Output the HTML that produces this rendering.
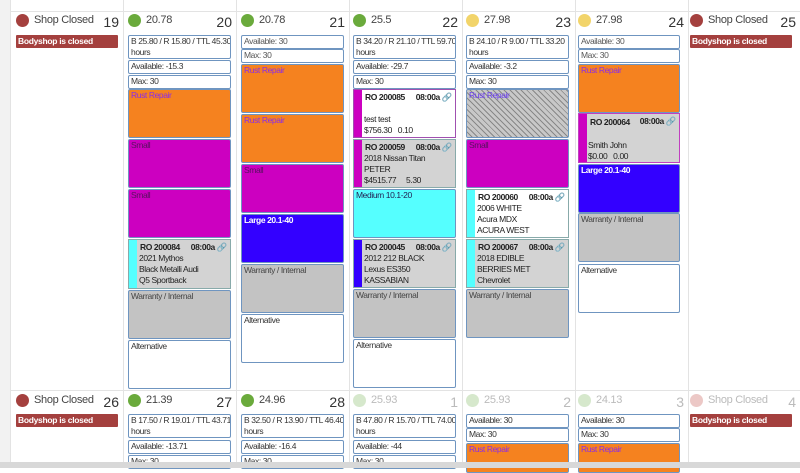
<!DOCTYPE html><html><head><style>
*{margin:0;padding:0;box-sizing:border-box}
body{width:800px;height:468px;overflow:hidden;background:#fff;position:relative;font-family:"Liberation Sans Narrow","Liberation Sans",sans-serif;color:#333}
.a{position:absolute}
.vl{position:absolute;top:0;width:1px;height:462px;background:#e3e3e3}
.hl{position:absolute;left:10px;width:790px;height:1px;background:#e3e3e3}
.dot{position:absolute;width:13px;height:13px;border-radius:50%}
.ht{position:absolute;font-size:11px;color:#444;letter-spacing:-0.3px}
.dn{position:absolute;font-size:14px;color:#333;text-align:right;width:20px}
.bc{position:absolute;height:13px;background:#a4403e;color:#fff;font-size:8.5px;font-weight:bold;padding:1px 2px;border-radius:1px;line-height:11px;letter-spacing:-0.3px}
.b{position:absolute;border:1px solid #6f95c0;border-radius:2px;font-size:8.5px;line-height:11px;padding:0 2px;overflow:hidden;letter-spacing:-0.4px;white-space:nowrap}
.w{background:#fff}
.o{background:#f5821f;color:#8b2ce8}
.m{background:#cc00c0;color:#5a1060}
.bl{background:#3300ff;color:#fff;font-weight:bold}
.g{background:#c3c3c3;color:#444}
.c{background:#55ffff;color:#225}
.h{background:repeating-linear-gradient(45deg,#c8c8c8 0 3px,#888 3px 4px);color:#6a3cf0}
.ro{position:absolute;border:1px solid #8aa;font-size:8.5px;line-height:11px;overflow:hidden;color:#222;letter-spacing:-0.4px;white-space:nowrap}
.ro .s{position:absolute;left:0;top:0;bottom:0;width:8px}
.ro .t{position:absolute;left:11px;top:2px;font-weight:bold}
.ro .tm{position:absolute;right:3px;top:2px;font-weight:bold}
.ro .d{position:absolute;left:10px}
</style></head><body>
<div class="a" style="left:0;top:0;width:10px;height:462px;background:#f2f2f2"></div>
<div class="vl" style="left:10px"></div><div class="vl" style="left:123px"></div><div class="vl" style="left:236px"></div><div class="vl" style="left:349px"></div><div class="vl" style="left:462px"></div><div class="vl" style="left:575px"></div><div class="vl" style="left:688px"></div>
<div class="hl" style="top:11px"></div><div class="hl" style="top:390px"></div>

<div class="dot" style="left:16px;top:14px;background:#a4403e"></div><div class="ht" style="left:34px;top:14px">Shop Closed</div><div class="dn" style="left:99px;top:14px">19</div>
<div class="bc" style="left:16px;top:35px;width:102px">Bodyshop is closed</div>
<div class="dot" style="left:128px;top:14px;background:#6aaa3c"></div><div class="ht" style="left:146px;top:14px">20.78</div><div class="dn" style="left:212px;top:14px">20</div>
<div class="dot" style="left:241px;top:14px;background:#6aaa3c"></div><div class="ht" style="left:259px;top:14px">20.78</div><div class="dn" style="left:325px;top:14px">21</div>
<div class="dot" style="left:353px;top:14px;background:#6aaa3c"></div><div class="ht" style="left:371px;top:14px">25.5</div><div class="dn" style="left:438px;top:14px">22</div>
<div class="dot" style="left:466px;top:14px;background:#f2d46a"></div><div class="ht" style="left:484px;top:14px">27.98</div><div class="dn" style="left:551px;top:14px">23</div>
<div class="dot" style="left:578px;top:14px;background:#f2d46a"></div><div class="ht" style="left:596px;top:14px">27.98</div><div class="dn" style="left:664px;top:14px">24</div>
<div class="dot" style="left:690px;top:14px;background:#a4403e"></div><div class="ht" style="left:708px;top:14px">Shop Closed</div><div class="dn" style="left:776px;top:14px">25</div>
<div class="bc" style="left:690px;top:35px;width:102px">Bodyshop is closed</div>

<div class="b w" style="left:128px;top:35px;width:103px;height:24px">B 25.80 / R 15.80 / TTL 45.30<br>hours</div>
<div class="b w" style="left:128px;top:60px;width:103px;height:14px">Available: -15.3</div>
<div class="b w" style="left:128px;top:75px;width:103px;height:14px">Max: 30</div>
<div class="b o" style="left:128px;top:89px;width:103px;height:49px">Rust Repair</div>
<div class="b m" style="left:128px;top:139px;width:103px;height:49px">Small</div>
<div class="b m" style="left:128px;top:189px;width:103px;height:49px">Small</div>
<div class="ro" style="left:128px;top:239px;width:103px;height:50px;background:#d3d3d3"><div class="s" style="background:#55ffff"></div><div class="t">RO 200084</div><div class="tm">08:00a <span style="color:#69c">&#128279;</span></div><div class="d" style="top:13px">2021 Mythos<br>Black Metalli Audi<br>Q5 Sportback</div></div>
<div class="b g" style="left:128px;top:290px;width:103px;height:49px">Warranty / Internal</div>
<div class="b w" style="left:128px;top:340px;width:103px;height:49px">Alternative</div>

<div class="b w" style="left:241px;top:35px;width:103px;height:14px;color:#555">Available: 30</div>
<div class="b w" style="left:241px;top:49px;width:103px;height:14px;color:#555">Max: 30</div>
<div class="b o" style="left:241px;top:64px;width:103px;height:49px">Rust Repair</div>
<div class="b o" style="left:241px;top:114px;width:103px;height:49px">Rust Repair</div>
<div class="b m" style="left:241px;top:164px;width:103px;height:49px">Small</div>
<div class="b bl" style="left:241px;top:214px;width:103px;height:49px">Large 20.1-40</div>
<div class="b g" style="left:241px;top:264px;width:103px;height:49px">Warranty / Internal</div>
<div class="b w" style="left:241px;top:314px;width:103px;height:49px">Alternative</div>

<div class="b w" style="left:353px;top:35px;width:103px;height:24px">B 34.20 / R 21.10 / TTL 59.70<br>hours</div>
<div class="b w" style="left:353px;top:60px;width:103px;height:14px">Available: -29.7</div>
<div class="b w" style="left:353px;top:75px;width:103px;height:14px">Max: 30</div>
<div class="ro" style="left:353px;top:89px;width:103px;height:49px;background:#fff;border-color:#a050b0"><div class="s" style="background:#cc00c0"></div><div class="t">RO 200085</div><div class="tm">08:00a <span style="color:#69c">&#128279;</span></div><div class="d" style="top:24px">test test<br>$756.30 &nbsp; 0.10</div></div>
<div class="ro" style="left:353px;top:139px;width:103px;height:49px;background:#d3d3d3"><div class="s" style="background:#cc00c0"></div><div class="t">RO 200059</div><div class="tm">08:00a <span style="color:#69c">&#128279;</span></div><div class="d" style="top:13px">2018 Nissan Titan<br>PETER<br>$4515.77 &nbsp; &nbsp; 5.30</div></div>
<div class="b c" style="left:353px;top:189px;width:103px;height:49px">Medium 10.1-20</div>
<div class="ro" style="left:353px;top:239px;width:103px;height:49px;background:#d3d3d3"><div class="s" style="background:#3300ff"></div><div class="t">RO 200045</div><div class="tm">08:00a <span style="color:#69c">&#128279;</span></div><div class="d" style="top:13px">2012 212 BLACK<br>Lexus ES350<br>KASSABIAN</div></div>
<div class="b g" style="left:353px;top:289px;width:103px;height:49px">Warranty / Internal</div>
<div class="b w" style="left:353px;top:339px;width:103px;height:49px">Alternative</div>

<div class="b w" style="left:466px;top:35px;width:103px;height:24px">B 24.10 / R 9.00 / TTL 33.20<br>hours</div>
<div class="b w" style="left:466px;top:60px;width:103px;height:14px">Available: -3.2</div>
<div class="b w" style="left:466px;top:75px;width:103px;height:14px">Max: 30</div>
<div class="b h" style="left:466px;top:89px;width:103px;height:49px">Rust Repair</div>
<div class="b m" style="left:466px;top:139px;width:103px;height:49px">Small</div>
<div class="ro" style="left:466px;top:189px;width:103px;height:49px;background:#fff"><div class="s" style="background:#55ffff"></div><div class="t">RO 200060</div><div class="tm">08:00a <span style="color:#69c">&#128279;</span></div><div class="d" style="top:13px">2006 WHITE<br>Acura MDX<br>ACURA WEST</div></div>
<div class="ro" style="left:466px;top:239px;width:103px;height:49px;background:#d3d3d3"><div class="s" style="background:#55ffff"></div><div class="t">RO 200067</div><div class="tm">08:00a <span style="color:#69c">&#128279;</span></div><div class="d" style="top:13px">2018 EDIBLE<br>BERRIES MET<br>Chevrolet</div></div>
<div class="b g" style="left:466px;top:289px;width:103px;height:49px">Warranty / Internal</div>

<div class="b w" style="left:578px;top:35px;width:102px;height:14px;color:#555">Available: 30</div>
<div class="b w" style="left:578px;top:49px;width:102px;height:14px;color:#555">Max: 30</div>
<div class="b o" style="left:578px;top:64px;width:102px;height:49px">Rust Repair</div>
<div class="ro" style="left:578px;top:113px;width:102px;height:50px;background:#d3d3d3;border-color:#c040c0"><div class="s" style="background:#cc00c0"></div><div class="t" style="top:3px">RO 200064</div><div class="tm">08:00a <span style="color:#69c">&#128279;</span></div><div class="d" style="left:9px;top:26px">Smith John<br>$0.00 &nbsp; 0.00</div></div>
<div class="b bl" style="left:578px;top:164px;width:102px;height:49px">Large 20.1-40</div>
<div class="b g" style="left:578px;top:213px;width:102px;height:49px">Warranty / Internal</div>
<div class="b w" style="left:578px;top:264px;width:102px;height:49px">Alternative</div>

<div class="dot" style="left:16px;top:394px;background:#a4403e"></div><div class="ht" style="left:34px;top:394px">Shop Closed</div><div class="dn" style="left:99px;top:394px">26</div>
<div class="bc" style="left:16px;top:414px;width:102px">Bodyshop is closed</div>
<div class="dot" style="left:128px;top:394px;background:#6aaa3c"></div><div class="ht" style="left:146px;top:394px">21.39</div><div class="dn" style="left:212px;top:394px">27</div>
<div class="dot" style="left:241px;top:394px;background:#6aaa3c"></div><div class="ht" style="left:259px;top:394px">24.96</div><div class="dn" style="left:325px;top:394px">28</div>
<div class="dot" style="left:353px;top:394px;background:#d6e8cc"></div><div class="ht" style="left:371px;top:394px;color:#bbb">25.93</div><div class="dn" style="left:438px;top:394px;color:#bbb">1</div>
<div class="dot" style="left:466px;top:394px;background:#d6e8cc"></div><div class="ht" style="left:484px;top:394px;color:#bbb">25.93</div><div class="dn" style="left:551px;top:394px;color:#bbb">2</div>
<div class="dot" style="left:578px;top:394px;background:#d6e8cc"></div><div class="ht" style="left:596px;top:394px;color:#bbb">24.13</div><div class="dn" style="left:664px;top:394px;color:#bbb">3</div>
<div class="dot" style="left:690px;top:394px;background:#ecc8c6"></div><div class="ht" style="left:708px;top:394px;color:#bbb">Shop Closed</div><div class="dn" style="left:776px;top:394px;color:#bbb">4</div>
<div class="bc" style="left:690px;top:414px;width:102px">Bodyshop is closed</div>

<div class="b w" style="left:128px;top:414px;width:103px;height:24px">B 17.50 / R 19.01 / TTL 43.71<br>hours</div>
<div class="b w" style="left:128px;top:440px;width:103px;height:14px">Available: -13.71</div>
<div class="b w" style="left:128px;top:455px;width:103px;height:14px">Max: 30</div>
<div class="b w" style="left:241px;top:414px;width:103px;height:24px">B 32.50 / R 13.90 / TTL 46.40<br>hours</div>
<div class="b w" style="left:241px;top:440px;width:103px;height:14px">Available: -16.4</div>
<div class="b w" style="left:241px;top:455px;width:103px;height:14px">Max: 30</div>
<div class="b w" style="left:353px;top:414px;width:103px;height:24px">B 47.80 / R 15.70 / TTL 74.00<br>hours</div>
<div class="b w" style="left:353px;top:440px;width:103px;height:14px">Available: -44</div>
<div class="b w" style="left:353px;top:455px;width:103px;height:14px">Max: 30</div>
<div class="b w" style="left:466px;top:414px;width:103px;height:14px">Available: 30</div>
<div class="b w" style="left:466px;top:428px;width:103px;height:14px">Max: 30</div>
<div class="b o" style="left:466px;top:443px;width:103px;height:30px">Rust Repair</div>
<div class="b w" style="left:578px;top:414px;width:102px;height:14px">Available: 30</div>
<div class="b w" style="left:578px;top:428px;width:102px;height:14px">Max: 30</div>
<div class="b o" style="left:578px;top:443px;width:102px;height:30px">Rust Repair</div>
<div class="a" style="left:0;top:462px;width:800px;height:6px;background:#d8d8d8"></div>
</body></html>
